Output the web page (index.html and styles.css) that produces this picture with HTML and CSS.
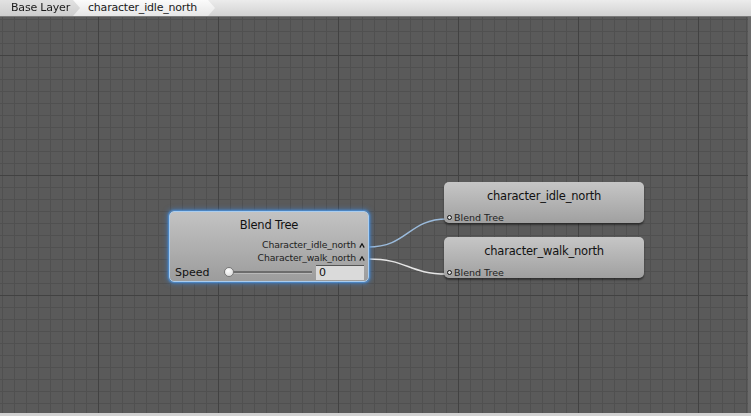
FILE: index.html
```html
<!DOCTYPE html>
<html>
<head>
<meta charset="utf-8">
<link rel="stylesheet" href="styles.css">
</head>
<body>
<div class="app">
  <div class="breadcrumbs">
    <div class="crumb crumb-first">Base Layer</div>
    <div class="crumb crumb-current">character_idle_north</div>
  </div>
  <div class="canvas">
    <svg class="wires" width="751" height="396" viewBox="0 0 751 396">
      <path d="M368,230 C408,230 408,202 447,202" stroke="#9bbbdc" stroke-width="1.5" fill="none"/>
      <path d="M368,242 C408,242 408,257 447,257" stroke="#e6e6e6" stroke-width="1.5" fill="none"/>
    </svg>

    <div class="node blend-node">
      <div class="node-title">Blend Tree</div>
      <div class="ports">
        <div class="port-out">Character_idle_north <svg class="caret" width="6" height="5" viewBox="0 0 6 5"><path d="M0.8,4.6 L3,0.8 L5.2,4.6" stroke="#111" stroke-width="1.2" fill="none"/></svg></div>
        <div class="port-out">Character_walk_north <svg class="caret" width="6" height="5" viewBox="0 0 6 5"><path d="M0.8,4.6 L3,0.8 L5.2,4.6" stroke="#111" stroke-width="1.2" fill="none"/></svg></div>
      </div>
      <div class="param-row">
        <span class="param-label">Speed</span>
        <div class="slider"><div class="slider-track"></div><div class="slider-knob"></div></div>
        <div class="field">0</div>
      </div>
    </div>

    <div class="node state-node state-idle">
      <div class="node-title">character_idle_north</div>
      <div class="port-in"><span class="dot"></span>Blend Tree</div>
    </div>

    <div class="node state-node state-walk">
      <div class="node-title">character_walk_north</div>
      <div class="port-in"><span class="dot"></span>Blend Tree</div>
    </div>
  </div>
  <div class="bottom-edge"></div>
</div>
</body>
</html>
```

FILE: styles.css
```css
html, body {
  margin: 0;
  padding: 0;
}
body {
  width: 751px;
  height: 416px;
  overflow: hidden;
  font-family: "DejaVu Sans", "Liberation Sans", sans-serif;
  background: #5a5a5a;
}
.app {
  display: flex;
  flex-direction: column;
  width: 751px;
  height: 416px;
}
.breadcrumbs {
  height: 17px;
  flex: 0 0 17px;
  display: flex;
  align-items: stretch;
  background: linear-gradient(#ececec, #d2d2d2);
  border-bottom: 1px solid #7a7a7a;
  box-sizing: border-box;
}
.crumb {
  font-size: 11px;
  line-height: 16px;
  color: #1a1a1a;
  white-space: nowrap;
  letter-spacing: -0.2px;
}
.crumb-first {
  position: relative;
  z-index: 2;
  padding: 0 14px 0 11px;
  width: 55px;
  background: linear-gradient(#e2e2e2, #cdcdcd);
  clip-path: polygon(0 0, calc(100% - 7px) 0, 100% 50%, calc(100% - 7px) 100%, 0 100%);
  filter: drop-shadow(1px 0 0 #fafafa);
}
.crumb-current {
  margin-left: -8px;
  padding: 0 17px 0 16px;
  width: 110px;
  background: linear-gradient(#fbfbfb, #e6e6e6);
  clip-path: polygon(0 0, calc(100% - 7px) 0, 100% 50%, calc(100% - 7px) 100%, 0 100%);
}
.canvas {
  position: relative;
  flex: 1 1 auto;
  background-color: #5a5a5a;
  background-image:
    linear-gradient(to right, #424242 0, #424242 1px, transparent 1px),
    linear-gradient(to bottom, #424242 0, #424242 1px, transparent 1px),
    linear-gradient(to right, #505050 0, #505050 1px, transparent 1px),
    linear-gradient(to bottom, #505050 0, #505050 1px, transparent 1px);
  background-size: 120px 100%, 100% 120px, 12px 100%, 100% 12px;
  background-position: 98px 0, 0 38px, 2px 0, 0 2px;
  border-right: 3px solid #6a6a6a;
}
.bottom-edge {
  flex: 0 0 3px;
  background: #d2d2d2;
}
.wires {
  position: absolute;
  left: 0;
  top: 0;
  z-index: 1;
}
.node {
  position: absolute;
  box-sizing: border-box;
  border-radius: 5px;
  color: #111;
  z-index: 2;
}
.node-title {
  text-align: center;
  font-size: 11.5px;
  letter-spacing: -0.2px;
}
.blend-node {
  left: 169px;
  top: 194px;
  width: 200px;
  height: 71px;
  background: linear-gradient(#c3c3c3, #9c9c9c);
  border: 1px solid #a9cdf0;
  box-shadow: 0 0 2px 1px #4d8fd4, 0 0 5px 2px rgba(60, 130, 210, 0.55);
  display: flex;
  flex-direction: column;
}
.blend-node .node-title {
  padding-top: 5px;
  line-height: 16px;
}
.ports {
  margin-top: 5px;
  display: flex;
  flex-direction: column;
  align-items: flex-end;
  padding-right: 3px;
}
.port-out {
  font-size: 9.3px;
  line-height: 13px;
  color: #222;
  display: flex;
  align-items: center;
  gap: 3px;
  letter-spacing: -0.15px;
}
.caret {
  display: block;
  margin-top: 2px;
}
.param-row {
  display: flex;
  align-items: center;
  padding: 0 4px 0 5px;
  height: 16px;
}
.param-label {
  font-size: 11px;
  color: #111;
  width: 49px;
}
.slider {
  position: relative;
  width: 88px;
  height: 11px;
}
.slider-track {
  position: absolute;
  left: 3px;
  right: 0;
  top: 4px;
  height: 2px;
  background: #6c6c6c;
  border-bottom: 1px solid #b8b8b8;
}
.slider-knob {
  position: absolute;
  left: 0;
  top: 0;
  width: 10px;
  height: 10px;
  border-radius: 50%;
  background: radial-gradient(circle at 40% 35%, #ffffff, #d4d4d4);
  border: 1px solid #777;
  box-sizing: border-box;
}
.field {
  margin-left: auto;
  width: 48px;
  height: 15px;
  box-sizing: border-box;
  background: #dadada;
  border-top: 1px solid #555;
  font-size: 11px;
  line-height: 14px;
  padding-left: 3px;
  color: #111;
}
.state-node {
  left: 444px;
  width: 200px;
  height: 41px;
  background: linear-gradient(#c6c6c6, #a0a0a0);
  box-shadow: 0 2px 2px rgba(0, 0, 0, 0.45);
  display: flex;
  flex-direction: column;
}
.state-idle {
  top: 165px;
}
.state-walk {
  top: 220px;
}
.state-node .node-title {
  padding-top: 6px;
  line-height: 16px;
}
.port-in {
  margin-top: 8px;
  display: flex;
  align-items: center;
  font-size: 9.5px;
  line-height: 11px;
  color: #222;
  padding-left: 3px;
  gap: 2px;
}
.dot {
  width: 5px;
  height: 5px;
  border: 1px solid #111;
  border-radius: 50%;
  box-sizing: border-box;
  background: #ddd;
}
```
